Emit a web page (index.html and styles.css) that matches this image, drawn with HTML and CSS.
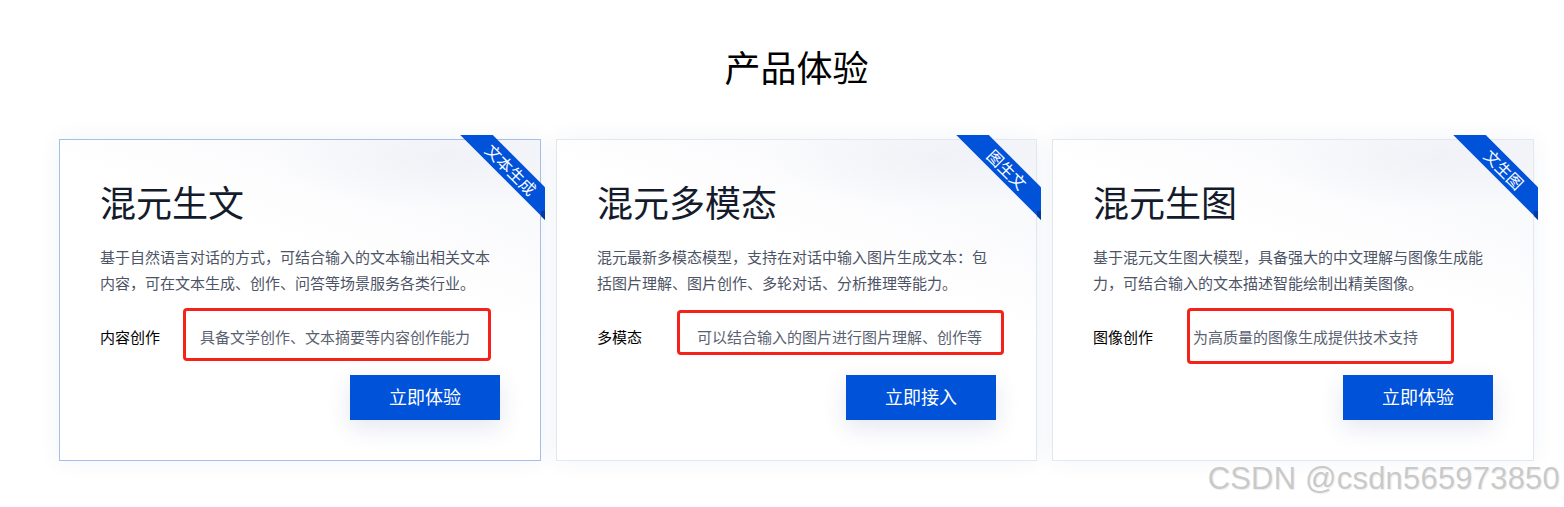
FILE: index.html
```html
<!DOCTYPE html>
<html lang="zh">
<head>
<meta charset="utf-8">
<title>产品体验</title>
<link rel="stylesheet" href="styles.css">
</head>
<body>
<section class="page">
  <h1 class="page-title">产品体验</h1>
  <div class="cards">
    <div class="card card-active">
      <div class="ribbon"><span class="ribbon-band">文本生成</span></div>
      <span class="ribbon-fold"></span>
      <h2 class="card-title">混元生文</h2>
      <p class="card-desc">基于自然语言对话的方式，可结合输入的文本输出相关文本内容，可在文本生成、创作、问答等场景服务各类行业。</p>
      <div class="feature">
        <span class="feature-label">内容创作</span>
        <span class="feature-value">具备文学创作、文本摘要等内容创作能力</span>
        <span class="mark mark-1"></span>
      </div>
      <div class="actions"><button class="btn">立即体验</button></div>
    </div>
    <div class="card">
      <div class="ribbon"><span class="ribbon-band">图生文</span></div>
      <span class="ribbon-fold"></span>
      <h2 class="card-title">混元多模态</h2>
      <p class="card-desc">混元最新多模态模型，支持在对话中输入图片生成文本：包括图片理解、图片创作、多轮对话、分析推理等能力。</p>
      <div class="feature">
        <span class="feature-label">多模态</span>
        <span class="feature-value">可以结合输入的图片进行图片理解、创作等</span>
        <span class="mark mark-2"></span>
      </div>
      <div class="actions"><button class="btn">立即接入</button></div>
    </div>
    <div class="card">
      <div class="ribbon"><span class="ribbon-band">文生图</span></div>
      <span class="ribbon-fold"></span>
      <h2 class="card-title">混元生图</h2>
      <p class="card-desc">基于混元文生图大模型，具备强大的中文理解与图像生成能力，可结合输入的文本描述智能绘制出精美图像。</p>
      <div class="feature">
        <span class="feature-label">图像创作</span>
        <span class="feature-value">为高质量的图像生成提供技术支持</span>
        <span class="mark mark-3"></span>
      </div>
      <div class="actions"><button class="btn">立即体验</button></div>
    </div>
  </div>
  <div class="watermark">CSDN @csdn565973850</div>
</section>
</body>
</html>
```
FILE: styles.css
```css
* { box-sizing: border-box; }
html, body { margin: 0; padding: 0; background: #fff; }
body {
  font-family: "Noto Sans CJK SC", "Noto Sans", sans-serif;
  width: 1564px;
  height: 507px;
  overflow: hidden;
}
.page {
  position: relative;
  height: 507px;
  padding-top: 41px;
}
.page-title {
  margin: 0 0 48px 59px;
  width: 1475px;
  text-align: center;
  font-size: 36px;
  line-height: 50px;
  font-weight: 400;
  color: #000;
}
.cards {
  margin-left: 59px;
  width: 1475px;
  display: grid;
  grid-template-columns: 482px 481px 482px;
  gap: 15px;
}
.card {
  position: relative;
  height: 322px;
  border: 1px solid #e4e7ee;
  padding: 36px 40px 40px 40px;
  background:
    radial-gradient(ellipse 240px 70px at 80% 6%, rgba(238,240,246,0.8) 0%, rgba(255,255,255,0) 70%),
    linear-gradient(200deg, #f5f6fa 0%, #ffffff 40%);
  box-shadow: 0 0 22px rgba(30, 60, 140, 0.06);
  display: flex;
  flex-direction: column;
}
.card-active { border-color: #a9bdea; }
.ribbon {
  position: absolute;
  top: -5px;
  right: -5px;
  width: 86px;
  height: 86px;
  overflow: hidden;
  z-index: 2;
}
.ribbon-band {
  position: absolute;
  left: -13px;
  top: 23px;
  width: 130px;
  height: 23px;
  line-height: 23px;
  background: #0052d9;
  color: #fff;
  font-size: 16px;
  text-align: center;
  transform: rotate(45deg);
}
.ribbon-fold {
  position: absolute;
  right: -5px;
  top: 71px;
  width: 4px;
  height: 9px;
  background: #003a9c;
  clip-path: polygon(0 0, 100% 0, 100% 100%, 0 55%);
  z-index: 3;
}
.card-title {
  margin: 0;
  font-size: 36px;
  line-height: 50px;
  font-weight: 400;
  color: #131b2c;
}
.card-desc {
  margin: 18px 0 0 0;
  font-size: 15px;
  line-height: 26px;
  color: #4d5465;
}
.feature {
  position: relative;
  margin-top: 27px;
  display: flex;
  align-items: center;
  height: 26px;
  font-size: 15px;
}
.feature-label {
  width: 100px;
  flex: none;
  color: #000;
}
.feature-value { color: #5a6170; }
.mark {
  position: absolute;
  border: 3px solid #f5221a;
  border-radius: 4px;
}
.mark-1 { left: 83px; top: -15px; width: 308px; height: 53px; }
.mark-2 { left: 80px; top: -13px; width: 327px; height: 45px; }
.mark-3 { left: 94px; top: -15px; width: 267px; height: 56px; }
.actions {
  margin-top: 26px;
  display: flex;
  justify-content: flex-end;
}
.btn {
  width: 150px;
  height: 45px;
  padding: 0 0 4px 0;
  border: 0;
  border-radius: 0;
  background: #0052d9;
  color: #fff;
  font-family: inherit;
  font-size: 18px;
  box-shadow: 0 8px 24px rgba(40, 60, 120, 0.12);
  cursor: pointer;
}
.watermark {
  position: absolute;
  right: 4px;
  top: 459px;
  font-family: "Liberation Sans", Arial, sans-serif;
  font-size: 31px;
  line-height: 40px;
  letter-spacing: 0.2px;
  color: #c9c9c9;
  text-shadow: 0 0 1px #fff, 1px 1px 1px rgba(0,0,0,0.08);
}
```
